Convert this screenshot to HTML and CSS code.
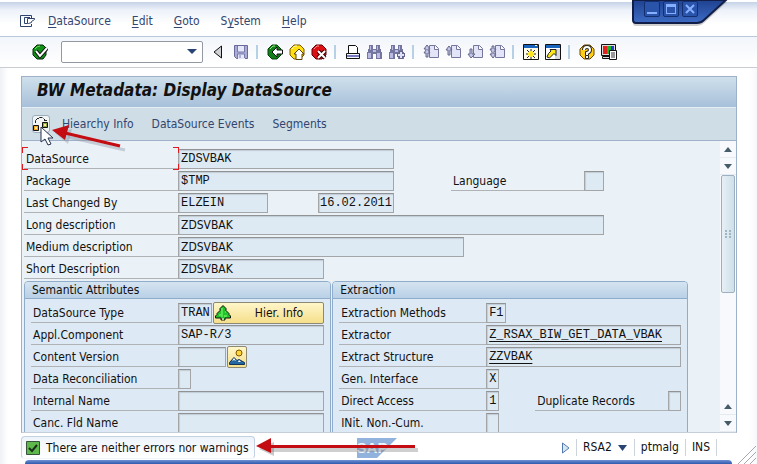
FILE: index.html
```html
<!DOCTYPE html>
<html lang="en">
<head>
<meta charset="utf-8">
<title>BW Metadata: Display DataSource</title>
<link rel="stylesheet" href="styles.css">
</head>
<body>
<svg class="defs" aria-hidden="true">
  <defs>
    <linearGradient id="frame" x1="0" y1="0" x2="0" y2="1"><stop offset="0" stop-color="#1f4190"/><stop offset="1" stop-color="#3d6cc4"/></linearGradient>
    <g id="page" fill="#e3e4f7" stroke="#75769c"><path d="M6.500 1.500h6l3 3v9h-9z"/><path d="M11.500 1.500v4h4" fill="#fff"/></g>
    <g id="binoculars"><path d="M2 1h4v4h3V1h4v4h1v3h1v7H9v-5H6v5H0V8h1V5h1z" fill="#75769f"/><path d="M3 2h1v4H3zM1 9h3v5H1zM10 2h1v4h-1zM10 9h3v5h-3zM6 6h3v2H6z" fill="#b9bbe4"/></g>
  </defs>
</svg>
<div class="window">
  <nav class="menubar">
    <button class="menu-icon" aria-label="Window menu"><svg width="16" height="14" viewBox="0 0 16 14"><path d="M11.500 4V1.500h-11v11h11V10M10 3.500H4.500v6h3" fill="none" stroke="#2c436f"/><path d="M7.500 4.500h7v1l-3 2v1l-3 1h-1z" fill="#fff" stroke="#2c436f"/></svg></button>
    <button><u>D</u>ataSource</button>
    <button><u>E</u>dit</button>
    <button><u>G</u>oto</button>
    <button>S<u>y</u>stem</button>
    <button><u>H</u>elp</button>
  </nav>

  <div class="controls">
    <svg class="controls-shape" viewBox="0 0 96 28" width="96" height="28"><path d="M1 0v21q0 3 3 3h61q4 0 7-3L95 0z" fill="#888" opacity=".4" transform="translate(0 2)"/><path d="M1 0v20q0 3 3 3h61q4 0 7-3L94 0z" fill="url(#frame)" stroke="#111f48" stroke-width="2"/></svg>
    <div class="controls-buttons">
      <button aria-label="Minimize"><svg width="14" height="14"><path d="M2 10h10v2H2z" fill="#86afff"/></svg></button>
      <button aria-label="Maximize"><svg width="14" height="14"><path d="M2 2h10v10H2zM3 5v6h8V5z" fill="#86afff" fill-rule="evenodd"/></svg></button>
      <button aria-label="Close"><svg width="14" height="14"><path d="M3 3l8 8M11 3l-8 8" stroke="#86afff" stroke-width="2"/></svg></button>
    </div>
  </div>

  <div class="toolbar">
    <button aria-label="Enter"><svg width="16" height="16"><path d="M5 1h6l3 3v7l-3 4H5l-4-4V5z" fill="#139019" stroke="#032b08"/><path d="M3 5q2-3 5-3" stroke="#75dc5f" fill="none"/><path d="M4 7l4 5 7-8" fill="none" stroke="#111" stroke-width="4"/><path d="M4 7l4 5 7-8" fill="none" stroke="#fff" stroke-width="2"/></svg></button>
    <span class="command">
      <select aria-label="Command"><option></option></select>
      <svg width="10" height="6"><path d="M0 0h10L5 5z" fill="#294372"/></svg>
    </span>
    <button class="collapse" aria-label="Collapse command field"><svg width="10" height="14"><path d="M8.500 1v12L1 7z" fill="#cfd1d4" stroke="#111"/></svg></button>
    <button aria-label="Save"><svg width="16" height="16"><path d="M1.500 1.500h13v13h-11l-2-2z" fill="#a9abd3" stroke="#686a9b"/><path d="M4 2h8v6H4zM5 10h7v5H5z" fill="#e6e7fa"/><path d="M4.500 2v6h7V2M4.500 14v-4h7v4M7 11v3" fill="none" stroke="#777aaa"/></svg></button>
    <span class="separator"></span>
    <button aria-label="Back"><svg width="16" height="16"><path d="M5 1h5l4 4v6l-4 4H5l-4-4V5z" fill="#128018" stroke="#063e0c"/><path d="M3 5l3-3h2" stroke="#94ed7b" fill="none"/><path d="M5 8l5-5v3h5.500v4H10v3z" fill="#fff" stroke="#111"/></svg></button>
    <button aria-label="Exit"><svg width="16" height="16"><path d="M5 1h6l4 4v6l-4 4H5l-4-4V5z" fill="#ffdf10" stroke="#7b5500"/><path d="M3 5l3-3h2" stroke="#fff8ad" fill="none"/><path d="M10 5l5 5h-2v5.500H7V10H5z" fill="#fff" stroke="#604200"/></svg></button>
    <button aria-label="Cancel"><svg width="16" height="16"><path d="M5 1h6l4 4v6l-4 4H5l-4-4V5z" fill="#dd1015" stroke="#650006"/><path d="M3 5l3-3h2" stroke="#ff968b" fill="none"/><path d="M7 7l7 7M14 7l-7 7" stroke="#400" stroke-width="4"/><path d="M7 7l7 7M14 7l-7 7" stroke="#fff" stroke-width="2"/></svg></button>
    <span class="separator"></span>
    <button aria-label="Print"><svg width="16" height="16"><path d="M3.500 9.500v-8h7l2 2v6" fill="#fff" stroke="#111"/><path d="M1.500 9.500h13v5h-13z" fill="#f4f4fa" stroke="#111"/><path d="M2 11h12v2H2z" fill="#7678c0"/></svg></button>
    <button aria-label="Find"><svg width="16" height="16"><use href="#binoculars"/></svg></button>
    <button aria-label="Find next"><svg width="16" height="16"><use href="#binoculars"/><path d="M12 7v8M8 11h8" stroke="#65678e" stroke-width="4"/><path d="M12 8v6M9 11h6" stroke="#e0e1f7" stroke-width="2"/></svg></button>
    <span class="separator"></span>
    <button aria-label="First page"><svg width="16" height="16"><use href="#page"/><path d="M4 1l3 4H5v1l2 3H5v4H3V9H1l2-3V5H1z" fill="#c3c5e6" stroke="#64668c"/></svg></button>
    <button aria-label="Previous page"><svg width="16" height="16"><use href="#page"/><path d="M1 6l3-4 3 4H5v5H3V6z" fill="#c3c5e6" stroke="#64668c"/></svg></button>
    <button aria-label="Next page"><svg width="16" height="16"><use href="#page"/><path d="M3 5h2v5h3l-4 4-3-4h2z" fill="#c3c5e6" stroke="#64668c"/></svg></button>
    <button aria-label="Last page"><svg width="16" height="16"><use href="#page"/><path d="M3 2h2v3h2L5 8v2h2l-3 4-3-4h2V8L1 5h2z" fill="#c3c5e6" stroke="#64668c"/></svg></button>
    <span class="separator"></span>
    <button aria-label="New session"><svg width="16" height="16"><path d="M.5.500h15v15H.5z" fill="#fffde9" stroke="#111"/><path d="M1 1h14v3H1z" fill="#1763bd"/><path d="M12 1h2v1h-2z" fill="#fff"/><path d="M8 5v10M3 10h10M4 6l8 8M12 6l-8 8" stroke="#222"/><path d="M8 7v6M5 10h6M6 8l4 4M10 8l-4 4" stroke="#ffe51b" stroke-width="2"/></svg></button>
    <button aria-label="Create shortcut"><svg width="16" height="16"><path d="M.5.500h15v15H.5z" fill="#fff" stroke="#111"/><path d="M1 1h14v3H1z" fill="#1763bd"/><path d="M10 5h5v10h-5z" fill="#d7d9df"/><path d="M5 5.500h6v6L9 9.500 4.500 14 2 13q1-4 4-6z" fill="#ffe51b" stroke="#222"/></svg></button>
    <span class="separator"></span>
    <button aria-label="Help"><svg width="16" height="16"><path d="M5 1h6l4 4v6l-4 4H5l-4-4V5z" fill="#ffcf16" stroke="#6c4500"/><path d="M5 6q0-3 3-3t3 3q0 2-3 3v2" fill="none" stroke="#222" stroke-width="4"/><path d="M5 6q0-3 3-3t3 3q0 2-3 3v2" fill="none" stroke="#fff" stroke-width="2"/><path d="M6.500 11.500h3v3h-3z" fill="#fff" stroke="#222"/></svg></button>
    <button aria-label="Customize local layout"><svg width="16" height="16"><path d="M.5.500h14v11H.5zM1.500 12.500h8v2h-8z" fill="#ddd" stroke="#111"/><path d="M2 2h4v8H2z" fill="#e32120"/><path d="M6 2h4v8H6z" fill="#17b52a"/><path d="M10 2h3v8h-3z" fill="#2439cf"/><path d="M8.500 6.500h7v9h-7z" fill="#fff" stroke="#111"/><path d="M10 9h4M10 11h4M10 13h4" stroke="#333"/></svg></button>
  </div>

  <main class="panel">
    <h1>BW Metadata: Display DataSource</h1>
    <div class="actions">
      <button class="hierarchy" aria-label="Display hierarchy"><svg width="16" height="16"><path d="M2.500 7V4.500l2-2M6.500 2V1.500h3M10.500 2.500l2 2M4 2.500h2M11 4.500h3" fill="none" stroke="#222"/><path d="M.5 9.500h5v5h-5z" fill="#f5a41d" stroke="#111"/><path d="M9.500 6.500h5v5h-5z" fill="#8da83d" stroke="#111"/><path d="M2 11h2v2H2zM11 8h2v2h-2z" fill="#ffe99b"/></svg></button>
      <button>Hiearchy Info</button>
      <button>DataSource Events</button>
      <button>Segments</button>
    </div>
    <div class="body">
      <form class="form">
        <div class="row"><label class="focused" for="ds">DataSource</label><input id="ds" class="mono w-216" value="ZDSVBAK" readonly></div>
        <div class="row"><label for="pkg">Package</label><input id="pkg" class="mono w-216" value="$TMP" readonly><label class="second language" for="lang">Language</label><input id="lang" class="w-20" readonly></div>
        <div class="row"><label for="by">Last Changed By</label><input id="by" class="mono w-90" value="ELZEIN" readonly><input class="date mono" aria-label="Last changed on" value="16.02.2011" readonly></div>
        <div class="row"><label for="long">Long description</label><input id="long" class="w-426" value="ZDSVBAK" readonly></div>
        <div class="row"><label for="medium">Medium description</label><input id="medium" class="w-286" value="ZDSVBAK" readonly></div>
        <div class="row"><label for="short">Short Description</label><input id="short" class="w-146" value="ZDSVBAK" readonly></div>

        <div class="groups">
          <section class="group">
            <h2>Semantic Attributes</h2>
            <div class="row"><label for="type">DataSource Type</label><input id="type" class="mono w-34" value="TRAN" readonly><button type="button" class="yellow hier"><svg width="16" height="16"><path d="M8 .5l3 3v2l3 3v1l1.500 1.500v2H10v2H6v-2H.5v-2L2 9.500v-1l3-3v-2z" fill="#20c32b" stroke="#111"/><path d="M7 3v9M4 10h2M10 7h1M9 11h3" stroke="#8cff79"/><path d="M7 13h2v2H7z" fill="#a6cf9d"/></svg><span>Hier. Info</span></button></div>
            <div class="row"><label for="appl">Appl.Component</label><input id="appl" class="mono w-146" value="SAP-R/3" readonly></div>
            <div class="row"><label for="version">Content Version</label><input id="version" class="w-48" readonly><button type="button" class="yellow picture" aria-label="Display content version"><svg width="16" height="16"><circle cx="10" cy="4" r="3" fill="#ffd43b" stroke="#7c5600"/><path d="M.5 15.500v-2L5 8.500l3 3 2-1 5.500 3v2z" fill="#2267a2" stroke="#143454"/><path d="M5 9l2 3-2-1-2 1zM10 11l2 2h-3z" fill="#fff"/></svg></button></div>
            <div class="row"><label for="recon">Data Reconciliation</label><input id="recon" class="w-13" readonly></div>
            <div class="row"><label for="internal">Internal Name</label><input id="internal" class="w-146" readonly></div>
            <div class="row"><label for="canc">Canc. Fld Name</label><input id="canc" class="w-146" readonly></div>
          </section>
          <section class="group extraction">
            <h2>Extraction</h2>
            <div class="row"><label for="methods">Extraction Methods</label><input id="methods" class="mono w-20" value="F1" readonly></div>
            <div class="row"><label for="extractor">Extractor</label><input id="extractor" class="mono linked w-195" value="Z_RSAX_BIW_GET_DATA_VBAK" readonly></div>
            <div class="row"><label for="structure">Extract Structure</label><input id="structure" class="mono linked w-195" value="ZZVBAK" readonly></div>
            <div class="row"><label for="gen">Gen. Interface</label><input id="gen" class="mono w-13" value="X" readonly></div>
            <div class="row"><label for="direct">Direct Access</label><input id="direct" class="mono w-13" value="1" readonly><label class="second duplicate" for="dup">Duplicate Records</label><input id="dup" class="w-13" readonly></div>
            <div class="row"><label for="noncum">INit. Non.-Cum.</label><input id="noncum" class="w-13" readonly></div>
          </section>
        </div>
      </form>
      <div class="scrollbar">
        <button aria-label="Scroll up"><svg width="8" height="5"><path d="M0 5l4-5 4 5z" fill="#465c69"/></svg></button>
        <button aria-label="Scroll down"><svg width="8" height="5"><path d="M0 0h8L4 5z" fill="#465c69"/></svg></button>
        <div class="track"><div class="thumb"><svg width="6" height="8"><path d="M0 0h2v2H0zM4 0h2v2H4zM0 3h2v2H0zM4 3h2v2H4zM0 6h2v2H0zM4 6h2v2H4z" fill="#9fb6c3"/></svg></div></div>
        <button aria-label="Page up"><svg width="8" height="5"><path d="M0 5l4-5 4 5z" fill="#465c69"/></svg></button>
        <button aria-label="Page down"><svg width="8" height="5"><path d="M0 0h8L4 5z" fill="#465c69"/></svg></button>
      </div>
    </div>
  </main>

  <footer class="status">
    <div class="message"><svg width="14" height="14"><path d="M.5.500h13v13H.5z" fill="#5fb84b" stroke="#37533a"/><path d="M3 7l3 3 5-6" fill="none" stroke="#17301b" stroke-width="2"/></svg><span>There are neither errors nor warnings</span></div>
    <div class="logo"><svg width="40" height="20"><path d="M0 0h40L20 20H0z" fill="#91b2dc"/></svg><span>SAP</span></div>
    <div class="session">
      <button aria-label="Expand status"><svg width="9" height="12"><path d="M1.500 1v10L8 6z" fill="#d5e6f6" stroke="#537cae"/></svg></button>
      <button class="cell system">RSA2<svg width="9" height="6"><path d="M0 0h9L4.500 6z" fill="#294372"/></svg></button>
      <span class="cell">ptmalg</span>
      <span class="cell last">INS</span>
    </div>
  </footer>
  <div class="bottom-frame"></div>
  <svg class="grip" width="18" height="18"><path d="M0 18L18 0M6 18L18 6M12 18l6-6" stroke="#a3a8b3"/></svg>

  <svg class="pointer" width="15" height="21"><path d="M1 1v15l4-3 3 6 3-1-3-6h5z" fill="#fff" stroke="#27304a"/></svg>
  <svg class="arrow arrow-top" width="76" height="32"><path d="M16 12l57 13" stroke="#8d98a5" stroke-width="3" opacity=".4"/><path d="M1 5l17-4-4 15z" fill="#8d98a5" opacity=".4" transform="translate(2 3)"/><path d="M13 8l55 13" stroke="#c30d12" stroke-width="3"/><path d="M0 5l17-5-4 15z" fill="#c30d12"/></svg>
  <svg class="arrow arrow-bottom" width="166" height="22"><path d="M15 13h147" stroke="#777" stroke-width="4" opacity=".35"/><path d="M0 9l15-7v14z" fill="#777" opacity=".4" transform="translate(3 3)"/><path d="M12 9.500h147" stroke="#c30d12" stroke-width="3"/><path d="M0 9l15-8v15z" fill="#c30d12"/></svg>
</div>
</body>
</html>
```
FILE: styles.css
```css
* { box-sizing: border-box; }

body {
  margin: 0;
  font: 12px/16px "DejaVu Sans Condensed", "DejaVu Sans", sans-serif;
  color: #111;
  background: #fff;
}

button, input, select { font: inherit; color: inherit; margin: 0; }

button {
  display: flex;
  align-items: center;
  justify-content: center;
  padding: 0;
  border: 0;
  background: none;
}

svg { display: block; flex: none; }
.defs { position: absolute; width: 0; height: 0; }

.window {
  position: relative;
  display: flex;
  flex-direction: column;
  height: 100vh;
  min-height: 460px;
  overflow: hidden;
  background: linear-gradient(90deg, #eff1f5, #fff 8px, #fff calc(100% - 8px), #f7f8fb);
}

.menubar {
  flex: none;
  display: flex;
  align-items: center;
  gap: 21px;
  height: 37px;
  padding: 4px 20px 0;
  border-top: 2px solid #fff;
  border-bottom: 1px solid #b9c8dd;
  background: linear-gradient(#c6d3e7, #edf2f9 8px, #fff 22px);
  color: #33466f;
}
.menubar .menu-icon { margin-right: -9px; }
.menubar u { text-underline-offset: 2px; }

.controls { position: absolute; top: 0; right: 29px; width: 96px; }
.controls-buttons { position: absolute; top: 1px; left: 12px; display: flex; gap: 3px; }
.controls-buttons button {
  width: 16px;
  height: 16px;
  border: 1px solid #142f70;
  border-radius: 2px;
  background: #2a54aa;
}

.toolbar {
  flex: none;
  display: flex;
  align-items: center;
  gap: 6px;
  height: 31px;
  padding-left: 32px;
  border-bottom: 1px solid #c9ccd3;
  background: linear-gradient(#f2f5fa, #fff 28px);
}
.command { display: grid; align-items: center; width: 142px; margin: 0 4px 0 7px; }
.command select {
  grid-area: 1 / 1;
  height: 22px;
  border: 1px solid #9299a3;
  border-radius: 2px;
  background: #fff;
  appearance: none;
}
.command svg { grid-area: 1 / 1; justify-self: end; margin-right: 6px; pointer-events: none; }
.collapse { margin-right: 4px; }
.separator { width: 6px; height: 14px; border-left: 2px solid #b6d0e5; margin-left: 1px; margin-right: -1px; }

.panel {
  flex: 1;
  min-height: 0;
  display: flex;
  flex-direction: column;
  margin: 8px 20px 0 21px;
  border: 1px solid #9fb0c9;
  border-bottom-color: #c5ced9;
  background: #eaf1f7;
}
.panel h1 {
  flex: none;
  margin: 0;
  height: 31px;
  padding: 0 15px;
  font: italic bold 17px/27px "DejaVu Sans Condensed", "DejaVu Sans", sans-serif;
  border-bottom: 1px solid #e3edf4;
  background: linear-gradient(#cfe0eb, #a7c0da);
}
.actions {
  flex: none;
  display: flex;
  align-items: center;
  gap: 18px;
  height: 33px;
  padding-left: 10px;
  border-bottom: 1px solid #9fb0c9;
  background: #cfdde7;
  color: #31466f;
}
.hierarchy {
  width: 18px;
  height: 18px;
  margin-right: -6px;
  border: 1px solid #9bacba;
  border-radius: 3px;
  background: #f2f5f5;
}

.body { flex: 1; min-height: 0; display: flex; }
.form {
  flex: 1;
  min-width: 0;
  overflow: hidden;
  padding: 6px 32px 0 2px;
}

.row { display: flex; align-items: flex-end; height: 22px; }
.row label {
  position: relative;
  flex: none;
  width: 154px;
  height: 20px;
  padding-left: 2px;
  line-height: 21px;
  white-space: nowrap;
  border-bottom: 1px solid #b0b3b6;
}
.row .focused::before {
  content: "";
  position: absolute;
  inset: -2px -1px -2px -2px;
  --red: linear-gradient(#e01b20, #e01b20);
  background:
    var(--red) 0 0 / 6px 1px, var(--red) 0 0 / 1px 6px,
    var(--red) 100% 0 / 6px 1px, var(--red) 100% 0 / 1px 6px,
    var(--red) 0 100% / 6px 1px, var(--red) 0 100% / 1px 6px,
    var(--red) 100% 100% / 6px 1px, var(--red) 100% 100% / 1px 6px;
  background-repeat: no-repeat;
}
.row .second { width: 133px; }
.row .language { margin-left: 57px; }
.row .duplicate { margin-left: 36px; }
.row input {
  flex: none;
  height: 20px;
  padding: 0 0 0 2px;
  border: 1px solid #a3a5a6;
  border-top-color: #909293;
  border-radius: 0;
  background: #dde9f3;
  box-shadow: inset 1px 1px 1px #c2cdd6;
  outline: 0;
}
.mono { font-family: "Liberation Mono", monospace; }
.row .linked { text-decoration: underline; text-underline-offset: 3px; }
.row .date { width: 76px; margin-left: 50px; padding-left: 1px; }
.w-13 { width: 13px; }
.w-20 { width: 20px; }
.w-34 { width: 34px; }
.w-48 { width: 48px; }
.w-90 { width: 90px; }
.w-146 { width: 146px; }
.w-195 { width: 195px; }
.w-216 { width: 216px; }
.w-286 { width: 286px; }
.w-426 { width: 426px; }

.groups { display: flex; gap: 1px; margin-top: 2px; }
.group {
  flex: 307;
  min-width: 0;
  padding: 0 6px 8px;
  border: 1px solid #8faccb;
  border-radius: 4px 4px 0 0;
  background: #dde9f4;
}
.extraction { flex: 358; }
.group h2 {
  margin: 0 -6px 2px;
  height: 17px;
  padding-left: 7px;
  font: inherit;
  border-bottom: 1px solid #8faccb;
  border-radius: 3px 3px 0 0;
  background: linear-gradient(#d5e4f1, #b9d0e6);
}
.group .row label { width: 147px; }
.group .row .second { width: 133px; }

.yellow {
  height: 22px;
  margin-left: 1px;
  margin-bottom: -1px;
  border: 1px solid #8d8a73;
  border-radius: 2px;
  background: linear-gradient(#fff6c9, #f5df8b);
}
.hier { width: 111px; padding-left: 1px; }
.hier span { flex: 1; padding-left: 4px; }
.picture { width: 20px; }

.scrollbar {
  flex: none;
  display: flex;
  flex-direction: column;
  width: 16px;
  background: #f7f9fc;
}
.scrollbar button { height: 17px; border-bottom: 1px solid #e6ebf0; }
.track { flex: 1; padding-left: 1px; }
.thumb {
  display: flex;
  align-items: center;
  justify-content: center;
  width: 14px;
  height: 46%;
  min-height: 118px;
  border: 1px solid #9cb0c1;
  border-radius: 2px;
  background: linear-gradient(90deg, #e6eff5, #cfe0e9);
}

.status {
  flex: none;
  display: flex;
  align-items: center;
  height: 27px;
  padding: 2px 40px 0 21px;
}
.message {
  display: flex;
  align-items: center;
  gap: 6px;
  height: 23px;
  padding: 0 5px 0 4px;
  border: 1px solid #c2d2e4;
  border-bottom-color: transparent;
  border-radius: 4px;
  background: linear-gradient(#edf4fa, #fff);
}
.logo { display: grid; margin-left: 102px; }
.logo svg, .logo span { grid-area: 1 / 1; }
.logo span { color: #eef4fb; font: bold 15px/20px "Liberation Sans", sans-serif; }
.session { display: flex; align-items: center; gap: 6px; margin-left: auto; }
.cell { padding-left: 6px; border-left: 1px solid #ccd3db; line-height: 17px; }
.system { gap: 6px; padding-right: 1px; }
.last { padding-right: 6px; border-right: 1px solid #ccd3db; }

.bottom-frame {
  flex: none;
  height: 4px;
  margin: 0 25px;
  border-radius: 10px 10px 0 0;
  background: linear-gradient(#6e91d2, #2f59ae);
}

.grip { position: absolute; right: 1px; bottom: 0; }
.pointer { position: absolute; top: 126px; left: 40px; }
.arrow { position: absolute; pointer-events: none; }
.arrow-top { top: 125px; left: 52px; }
.arrow-bottom { bottom: 5px; left: 256px; }
```
